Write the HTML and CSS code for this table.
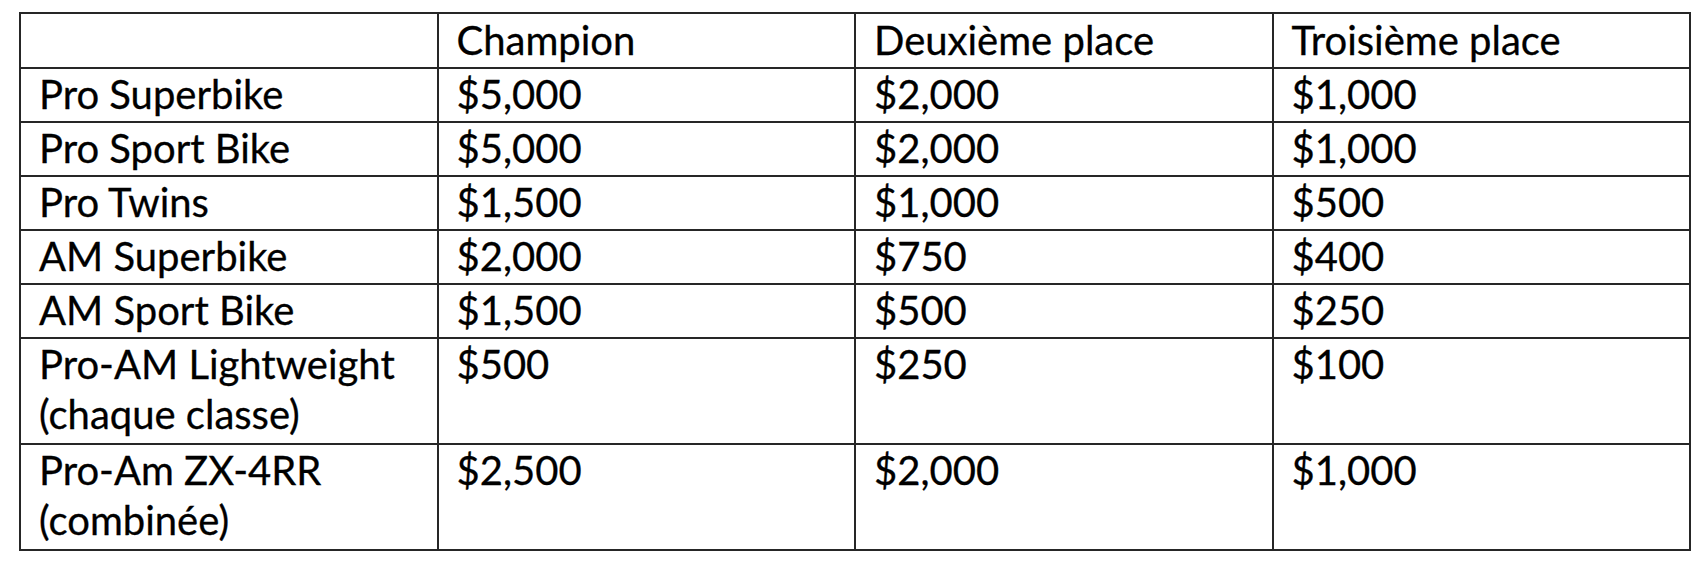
FILE: index.html
```html
<!DOCTYPE html>
<html lang="fr">
<head>
<meta charset="utf-8">
<title>Prix</title>
<link rel="stylesheet" href="styles.css">
</head>
<body>
<div class="page">
<table class="prizes">
  <tr class="head">
    <td></td>
    <td>Champion</td>
    <td>Deuxième place</td>
    <td>Troisième place</td>
  </tr>
  <tr>
    <td>Pro Superbike</td>
    <td>$5,000</td>
    <td>$2,000</td>
    <td>$1,000</td>
  </tr>
  <tr>
    <td>Pro Sport Bike</td>
    <td>$5,000</td>
    <td>$2,000</td>
    <td>$1,000</td>
  </tr>
  <tr>
    <td>Pro Twins</td>
    <td>$1,500</td>
    <td>$1,000</td>
    <td>$500</td>
  </tr>
  <tr>
    <td>AM Superbike</td>
    <td>$2,000</td>
    <td>$750</td>
    <td>$400</td>
  </tr>
  <tr>
    <td>AM Sport Bike</td>
    <td>$1,500</td>
    <td>$500</td>
    <td>$250</td>
  </tr>
  <tr class="tall">
    <td>Pro-AM Lightweight<br>(chaque classe)</td>
    <td>$500</td>
    <td>$250</td>
    <td>$100</td>
  </tr>
  <tr class="tall">
    <td>Pro-Am ZX-4RR<br>(combinée)</td>
    <td>$2,500</td>
    <td>$2,000</td>
    <td>$1,000</td>
  </tr>
</table>
</div>
</body>
</html>
```
FILE: styles.css
```css
html, body {
  margin: 0;
  padding: 0;
  background: #ffffff;
}
.page {
  padding: 12px 0 0 19px;
}
.prizes {
  border-collapse: collapse;
  width: 1672px;
  table-layout: fixed;
  font-family: "Lato", "Liberation Sans", sans-serif;
  font-size: 40px;
  color: #000;
  -webkit-text-stroke: 0.3px #000;
}
.prizes td {
  border: 2px solid #262626;
  width: 25%;
  vertical-align: top;
  line-height: 50px;
  padding: 0 10px 2px 18px;
  white-space: nowrap;
}
.prizes .head td {
  padding-top: 1px;
}
.prizes .tall td {
  padding-bottom: 4px;
}
```
